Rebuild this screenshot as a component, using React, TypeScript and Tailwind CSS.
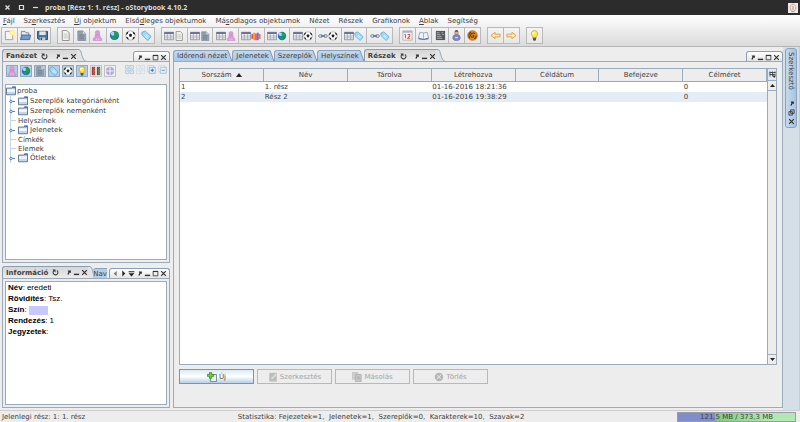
import type { ReactNode } from "react";
import clsx from "clsx";

type IconName =
  | "new" | "open" | "save" | "page" | "note" | "person" | "globe" | "ball" | "tag" | "table" | "people"
  | "link" | "calendar" | "book" | "memo" | "figure" | "spiral" | "left" | "right" | "bulb" | "strands" | "puzzle"
  | "gridA" | "gridB" | "expand" | "collapse" | "folder" | "refresh" | "pin" | "min" | "max" | "close"
  | "prev" | "next" | "list" | "restore" | "add" | "edit" | "copy" | "remove";

const shapes: Record<IconName, ReactNode> = {
  new: (
    <>
      <path d="M1.500 1.500h8v9h-8z" fill="#f4f4f2" stroke="#9a9a98" />
      <circle cx="9" cy="3" r="3" fill="#fff27a" />
      <circle cx="9" cy="3" r="1.500" fill="#fffbd0" />
    </>
  ),
  open: (
    <>
      <path d="M1.500 9.500V1.500h4l1 1.500h3v3" fill="#e8e8e8" stroke="#7d8790" />
      <path d="M.5 10.500l1.500-5h9.500l-1 5z" fill="#6f9bd0" stroke="#3f6ba5" />
    </>
  ),
  save: (
    <>
      <path d="M.5 1.500h11v9H2l-1.500-1.500z" fill="#4b7399" stroke="#2d4a66" />
      <path d="M2.500 1.500h7v4h-7z" fill="#dfe7ee" />
      <path d="M3 8h6v3H3z" fill="#c3ccd4" />
      <path d="M4 8.500h1.500V11H4z" fill="#2d4a66" />
    </>
  ),
  page: (
    <>
      <path d="M2.500.5h5l2.500 2.500v8.500h-7.500z" fill="#f2f2f0" stroke="#8b8b88" />
      <path d="M4 4.500h4M4 6.500h4.500M4 8.500h4.500" stroke="#b4b4b1" strokeWidth=".8" />
    </>
  ),
  note: (
    <>
      <path d="M2 1h5.500L10.500 4v7.500H2z" fill="#93a1ae" stroke="#788796" strokeWidth=".8" />
      <path d="M7.500 1v3h3" fill="#d4dbe1" />
      <path d="M3.500 5.500h5M3.500 7.500h5M3.500 9.500h5" stroke="#687683" strokeWidth=".8" />
    </>
  ),
  person: (
    <>
      <circle cx="6" cy="3" r="2.500" fill="#db9bd9" stroke="#c583c6" strokeWidth=".5" />
      <path d="M3.500 5.200h5v2l2 2v2.300h-9V9.200l2-2z" fill="#db9bd9" stroke="#c583c6" strokeWidth=".7" />
      <path d="M4.800 9v2.300M7.200 9v2.300" stroke="#f2d9f1" strokeWidth=".8" />
    </>
  ),
  globe: (
    <>
      <circle cx="6" cy="6" r="5" fill="#1f6fc4" />
      <circle cx="4.200" cy="4" r="2.200" fill="#a5dcf8" />
      <path d="M6 1.500l3 1 1.700 3.500L8.500 7.500l-2-1-1-2zM3 6.800l3 .5 2 1.500-1.500 1.900-2.700-1z" fill="#1fa348" />
    </>
  ),
  ball: (
    <>
      <circle cx="6" cy="6" r="5" fill="#fafafa" stroke="#8a8a8a" strokeWidth=".6" />
      <path d="M4.200 5.200L6 3.900l1.800 1.300-.7 2.200H4.900zM.8 5.500L3 4 3.800 1.600 1.900 2.500zM8.200 1.600L9 4l2.200 1.500-.6-2.500zM1.200 7.500l2 .5 1 2.700-2-1.200zM8 10.700l.8-2.700 2-.5-.9 2z" fill="#1d1d1d" />
    </>
  ),
  tag: (
    <>
      <path d="M1 2.500L4.500 1l6.500 6-3.500 4.500L1 5.500z" fill="#a6dcf5" stroke="#4ba3cf" strokeWidth=".8" />
      <circle cx="3.200" cy="3.600" r=".9" fill="#fff" stroke="#4ba3cf" strokeWidth=".4" />
      <path d="M5 5l3 3M4 6l3 3" stroke="#e9f8ff" strokeWidth=".8" />
    </>
  ),
  table: (
    <>
      <path d="M.5 1.500h11v9H.5z" fill="#f4f4f6" stroke="#6f7280" strokeWidth=".8" />
      <path d="M.5 1.500h11v2H.5z" fill="#5b6096" />
      <path d="M4 3.500v7M8 3.500v7M.5 6h11M.5 8.300h11" stroke="#8b8f9b" strokeWidth=".7" />
    </>
  ),
  people: (
    <>
      <path d="M.5 3.500h2.200v6H.5z" fill="#e0524d" />
      <path d="M2.700 2h2.200v9H2.700z" fill="#f59a2c" />
      <path d="M4.900 3h2.200v8H4.900z" fill="#e0559f" />
      <path d="M7.100 2h2.200v9H7.100z" fill="#4a7de0" />
      <path d="M9.300 3.500h2.200v6H9.300z" fill="#f0753d" />
    </>
  ),
  link: (
    <g fill="none" strokeWidth="1.200">
      <rect x=".8" y="4.500" width="4.500" height="3" rx="1.500" stroke="#7889a3" />
      <rect x="6.700" y="4.500" width="4.500" height="3" rx="1.500" stroke="#7889a3" />
      <path d="M3.500 6h5" stroke="#405577" />
    </g>
  ),
  calendar: (
    <>
      <path d="M1 1h10v10H1z" fill="#f7f7fa" stroke="#9b9fb5" strokeWidth=".8" />
      <path d="M1 1h10v2H1z" fill="#a8b0d4" />
      <path d="M3.800 4.500v4.500M2.800 5.300l1-.8M6 5h2.500v1.500L6.200 9H9" fill="none" stroke="#e0532c" strokeWidth="1.100" />
    </>
  ),
  book: (
    <>
      <path d="M.5 8.500L2 2.500l4 .8 4-.8 1.500 6-5.500 1.800z" fill="#eef3fa" stroke="#8393aa" strokeWidth=".8" />
      <path d="M.5 8.500v1.500l5.500 1 5.500-1V8.500L6 10z" fill="#53709c" />
      <path d="M6 3.500V10" stroke="#8393aa" strokeWidth=".7" />
    </>
  ),
  memo: (
    <>
      <path d="M1 1h10v10H1z" fill="#55585c" />
      <path d="M2 3h3M2 5h4M2 7h5M2 9h6M7 3h2M8 5h2" stroke="#b8bcc0" strokeWidth=".9" />
    </>
  ),
  figure: (
    <>
      <circle cx="6" cy="3" r="2" fill="#e2b38b" stroke="#8d6746" strokeWidth=".6" />
      <path d="M4 2a2 2 0 0 1 4 0z" fill="#6b4a32" />
      <path d="M2 8.500C2 5.500 4 5 6 5s4 .5 4 3.500C10 11 8 11.500 6 11.500S2 11 2 8.500z" fill="#7f87c4" stroke="#5a62a4" strokeWidth=".6" />
      <path d="M4.500 7.500h3V9h-3z" fill="#d3d6f3" />
    </>
  ),
  spiral: (
    <>
      <circle cx="6" cy="6" r="5.300" fill="#e58a1f" stroke="#93520e" strokeWidth=".6" />
      <path d="M6 6c1-1 2 .2 1.300 1.200C6.400 8.500 4 8 4 6c0-2.500 3-3.500 4.800-1.800M3 9C1.500 7 2 3.500 4.500 2.200M8 9.500c1.500-.7 2.200-2 2-3.500" fill="none" stroke="#6a3606" strokeWidth="1.100" />
    </>
  ),
  left: <path d="M1 6l4.500-3.500v2H11v3H5.500v2z" fill="#ffe9a8" stroke="#cf9a45" strokeWidth=".9" />,
  right: <path d="M11 6L6.500 2.500v2H1v3h5.500v2z" fill="#ffe9a8" stroke="#cf9a45" strokeWidth=".9" />,
  bulb: (
    <>
      <path d="M6 .5a3.600 3.600 0 0 1 2 6.500V8.500H4V7A3.600 3.600 0 0 1 6 .5z" fill="#ffe84a" stroke="#a48a20" strokeWidth=".6" />
      <circle cx="5" cy="3.500" r="1.300" fill="#fffbd0" />
      <path d="M4.300 8.500h3.400v2.300l-1 .8H5.300l-1-.8z" fill="#55595f" />
    </>
  ),
  strands: (
    <>
      <path d="M1 1h4v10H1z" fill="#a33a3a" />
      <path d="M7 1h4v10H7z" fill="#3d6b40" />
      <path d="M3 1.500l1 1.500-1 1.500L4 6 3 7.500 4 9l-1 1.500" fill="none" stroke="#d99a9a" strokeWidth=".8" />
      <path d="M9 1.500l1 1.500-1 1.500L10 6 9 7.500l1 1.500-1 1.500" fill="none" stroke="#b5a0a0" strokeWidth=".8" />
    </>
  ),
  puzzle: (
    <>
      <circle cx="6" cy="6" r="5" fill="#aba7d8" />
      <path d="M6 1v10M1 6h10" stroke="#f1f0fb" strokeWidth="1.300" />
    </>
  ),
  gridA: (
    <g fill="#f5f9fc" stroke="#8fb0cd" strokeWidth=".8">
      <path d="M.8.8h4.400v4.400H.8zM6.800.8h4.400v4.400H6.800zM.8 6.800h4.400v4.400H.8zM6.800 6.800h4.400v4.400H6.800z" />
      <path d="M2 3h2M8 3h2M2 9h2M8 9h2" />
    </g>
  ),
  gridB: (
    <g fill="#f5f9fc" stroke="#bccfe0" strokeWidth=".8">
      <path d="M.8.8h4.400v4.400H.8zM6.800.8h4.400v4.400H6.800zM.8 6.800h4.400v4.400H.8zM6.800 6.800h4.400v4.400H6.800z" />
      <path d="M2 3h2M8 3h2M2 9h2M8 9h2" />
    </g>
  ),
  expand: (
    <>
      <path d="M1 1h8v8H1z" fill="#fff" stroke="#a9c4dc" />
      <path d="M3 3h8v8H3z" fill="#e9f3fb" stroke="#7ba7cd" />
      <path d="M7 4.800v4.400M4.800 7h4.400" stroke="#1f6fb5" strokeWidth="1.300" />
    </>
  ),
  collapse: (
    <>
      <path d="M1 1h8v8H1z" fill="#fff" stroke="#b5cbe0" />
      <path d="M3 3h8v8H3z" fill="#e9f3fb" stroke="#8fb3d2" />
      <path d="M4.800 7h4.400" stroke="#5c94c4" strokeWidth="1.300" />
    </>
  ),
  folder: (
    <>
      <path d="M.6 10.500v-8h6l1.400-1.300h3.400v9.300z" fill="#c3d7ec" stroke="#5e7286" strokeWidth="1.100" />
      <path d="M1.200 4h9.600v3H1.200z" fill="#f3f8fc" />
      <path d="M7.800.7h4v2H6.800z" fill="#5272c4" />
    </>
  ),
  refresh: (
    <>
      <path d="M4 2.200A4.200 4.200 0 1 0 8.500 2.500" fill="none" stroke="#3c3c3c" strokeWidth="1.800" />
      <path d="M.5.8h5.500v5z" fill="#3c3c3c" />
    </>
  ),
  pin: <path d="M4.500 2.500h5.500v4.500L8 6 6 10 4 9l2-4z" fill="#2b2b2b" />,
  min: <path d="M1.500 8h9v2.500h-9z" fill="#333" />,
  max: (
    <>
      <path d="M2 2.500h8v7.500H2z" fill="none" stroke="#333" strokeWidth="1.400" />
      <path d="M1.500 1.500h9v2h-9z" fill="#333" />
    </>
  ),
  close: <path d="M2 2l8 8M10 2l-8 8" stroke="#333" strokeWidth="2" />,
  prev: <path d="M8 1.500v9L3 6z" fill="#777" />,
  next: <path d="M4 1v10l5-5z" fill="#222" />,
  list: <path d="M1 2h10v1.800H1zM1 5.500h10L6 11z" fill="#222" />,
  restore: (
    <g fill="none" stroke="#333" strokeWidth="1.400">
      <path d="M4.500 1.500h6v6h-6z" />
      <path d="M1.500 4.500h6v6h-6z" />
    </g>
  ),
  add: (
    <>
      <path d="M4 3h7.500v8.500H4z" fill="#eef1f4" stroke="#5d7389" />
      <path d="M3 .5h2.500v2.300H8v2.500H5.500v2.300H3V5.300H.5V2.800H3z" fill="#6fd03c" stroke="#2c7d1d" strokeWidth=".8" />
    </>
  ),
  edit: (
    <>
      <path d="M1.500 1h9v10.500h-9z" fill="#bdbdbd" />
      <path d="M3.500 9l1-2.500L9 2l1.500 1.500L6 8z" fill="#dcdcdc" />
    </>
  ),
  copy: (
    <>
      <path d="M.5.5H7v8H.5z" fill="#d0d0d0" stroke="#c0c0c0" />
      <path d="M4 3h7v8.500H4z" fill="#c8c8c8" stroke="#adadad" />
      <path d="M5.500 6h4M5.500 8h4" stroke="#aaa" />
    </>
  ),
  remove: (
    <>
      <circle cx="6" cy="6" r="5" fill="#b5b5b5" />
      <path d="M3.500 8.500l5-5M4 4l4 4" stroke="#dedede" strokeWidth="1.400" />
    </>
  ),
};

function Icon({ name, className = "size-[11px]" }: { name: IconName; className?: string }) {
  return (
    <svg viewBox="0 0 12 12" className={clsx("shrink-0", className)} aria-hidden="true">
      {shapes[name]}
    </svg>
  );
}

const menus: [string, string, string][] = [
  ["", "F", "ájl"],
  ["Sz", "e", "rkesztés"],
  ["", "Ú", "j objektum"],
  ["Első", "d", "leges objektumok"],
  ["Má", "s", "odlagos objektumok"],
  ["Nézet", "", ""],
  ["Részek", "", ""],
  ["Grafikonok", "", ""],
  ["", "A", "blak"],
  ["Segítség", "", ""],
];

const toolbar: { width: string; items: IconName[][] }[] = [
  { width: "w-[50px]", items: [["new"], ["open"], ["save"]] },
  { width: "w-[98px]", items: [["page"], ["note"], ["person"], ["globe"], ["ball"], ["tag"]] },
  {
    width: "w-[232px]",
    items: [
      ["table", "page"],
      ["table", "note"],
      ["table", "person"],
      ["table", "people"],
      ["table", "globe"],
      ["table", "ball"],
      ["link", "ball"],
      ["table", "tag"],
      ["link", "tag"],
    ],
  },
  { width: "w-[82px]", items: [["calendar"], ["book"], ["memo"], ["figure"], ["spiral"]] },
  { width: "w-[33px]", items: [["left"], ["right"]] },
  { width: "w-[17px]", items: [["bulb"]] },
];

const filters: { icon: IconName; on: boolean }[] = [
  { icon: "person", on: true },
  { icon: "globe", on: true },
  { icon: "note", on: true },
  { icon: "tag", on: true },
  { icon: "ball", on: true },
  { icon: "bulb", on: true },
  { icon: "strands", on: false },
  { icon: "puzzle", on: false },
];

const tree = [
  { label: "Szereplők kategóriánként", folder: true },
  { label: "Szereplők nemenként", folder: true },
  { label: "Helyszínek", folder: false },
  { label: "Jelenetek", folder: true },
  { label: "Címkék", folder: false },
  { label: "Elemek", folder: false },
  { label: "Ötletek", folder: true },
];

const columns = ["Sorszám", "Név", "Tárolva", "Létrehozva", "Céldátum", "Befejezve", "Célméret"];
const rows = [
  ["1", "1. rész", "", "01-16-2016 18:21:36", "", "", "0"],
  ["2", "Rész 2", "", "01-16-2016 19:38:29", "", "", "0"],
];

function IconButton({ name, label }: { name: IconName; label: string }) {
  return (
    <button type="button" aria-label={label} className="flex shrink-0">
      <Icon name={name} className="size-[7px]" />
    </button>
  );
}

function ActiveTab({ title }: { title: string }) {
  return (
    <div className="flex h-[13px] shrink-0">
      <div className="flex items-center rounded-tl-[3px] border-t border-l border-[#8d9eae] bg-linear-to-b from-[#d6d6d6] to-[#eeeeee] pl-[3px] font-bold">
        <span>{title}</span>
        <span className="ml-1 flex">
          <IconButton name="refresh" label="Frissítés" />
        </span>
        <span className="ml-[6px] flex items-center gap-px">
          <IconButton name="pin" label="Rögzítés" />
          <IconButton name="min" label="Kis méret" />
          <IconButton name="close" label="Bezárás" />
        </span>
      </div>
      <svg viewBox="0 0 10 13" className="h-[13px] w-[10px]" aria-hidden="true">
        <path d="M0 0h1c3 0 3 3 4 6s2 6.500 5 6.500V13H0z" fill="#e4e4e4" />
        <path d="M0 .5h1c3 0 3 3 4 6s2 6 5 6" fill="none" stroke="#8d9eae" />
      </svg>
    </div>
  );
}

function BlueTab({ title }: { title: string }) {
  return (
    <button type="button" className="flex h-[12px] shrink-0 leading-[10px]">
      <span className="h-full rounded-tl-[3px] border-t border-l border-[#8aa3bb] bg-linear-to-b from-[#c4d9ee] to-[#a9c4e0] pl-[3px]">
        {title}
      </span>
      <svg viewBox="0 0 5 12" className="h-full w-[5px]" aria-hidden="true">
        <path d="M0 0h1l4 11v1H0z" fill="#b6cee6" />
        <path d="M0 .5h1l3.500 9.500v2" fill="none" stroke="#7f98b0" />
      </svg>
    </button>
  );
}

function WindowButtons({ extra }: { extra?: ReactNode }) {
  return (
    <div className="ml-auto flex h-[11px] shrink-0 items-center gap-px rounded-t-[3px] border border-b-0 border-[#8d9eae] bg-linear-to-b from-white to-[#e2e2e2] px-[2px]">
      {extra}
      <IconButton name="pin" label="Rögzítés" />
      <IconButton name="min" label="Kis méret" />
      <IconButton name="max" label="Teljes méret" />
      <IconButton name="close" label="Bezárás" />
    </div>
  );
}

function ActionButton({ icon, label, disabled }: { icon: IconName; label: string; disabled?: boolean }) {
  return (
    <button
      type="button"
      disabled={disabled}
      className={clsx(
        "flex h-[15px] w-[75px] items-center justify-center gap-[2px] border",
        disabled
          ? "border-[#b8b8b8] text-[#a3a3a3]"
          : "border-[#7d94ab] bg-linear-to-b from-[#dce9f5] via-white to-[#b7cfe5]",
      )}
    >
      <Icon name={icon} className="size-[10px]" />
      {label}
    </button>
  );
}

function TitleBar() {
  return (
    <header className="flex h-[15px] shrink-0 items-center bg-[#2c2c2c] pr-[2px] pl-1 text-[#dcdcd8]">
      <button type="button" aria-label="Bezárás" className="mr-[7px]">
        <svg viewBox="0 0 7 7" className="size-[7px]" aria-hidden="true">
          <path d="M1.500 1.500l4 4M5.500 1.500l-4 4" stroke="#dcdcd8" strokeWidth="1.400" />
        </svg>
      </button>
      <button type="button" aria-label="Teljes méret" className="mr-[7px]">
        <svg viewBox="0 0 7 7" className="size-[7px]" aria-hidden="true">
          <path d="M1.500 1.500h4v4h-4z" fill="none" stroke="#dcdcd8" strokeWidth="1.200" />
        </svg>
      </button>
      <button type="button" aria-label="Kis méret" className="mr-[6px]">
        <svg viewBox="0 0 7 7" className="size-[7px]" aria-hidden="true">
          <path d="M1 3.500h5" stroke="#dcdcd8" strokeWidth="1.200" />
        </svg>
      </button>
      <h1 className="font-['Open_Sans',sans-serif] text-[7px] font-bold">
        proba [Rész 1: 1. rész] - oStorybook 4.10.2
      </h1>
      <svg viewBox="0 0 10 10" className="ml-auto size-[10px]" aria-hidden="true">
        <path d="M0 0h10v10H0z" fill="#eeeae8" />
        <path d="M5 1c3 1 3 3 2.500 5S6 8.500 5 8.500 3 8 2.500 6 2 2 5 1z" fill="none" stroke="#e39a8c" />
        <path d="M5 3v4M3.500 8.500h3" stroke="#999" />
      </svg>
    </header>
  );
}

function TreePanel() {
  return (
    <section className="flex min-h-0 flex-[3] flex-col">
      <div className="flex items-end">
        <ActiveTab title="Fanézet" />
        <WindowButtons />
      </div>
      <div className="-mt-px flex min-h-0 flex-1 flex-col border border-[#9aacbc] bg-[#ededed] p-[2px]">
        <div className="flex h-5 shrink-0 items-start pt-px pl-px">
          <div className="flex gap-[2px]">
            {filters.map(({ icon, on }) => (
              <button
                key={icon}
                type="button"
                aria-label={icon}
                aria-pressed={on}
                className={clsx(
                  "flex size-3 items-center justify-center border",
                  on ? "border-[#8fa8c0] bg-[#b4cde5]" : "border-[#c2c2c2] bg-[#eeeeee]",
                )}
              >
                <Icon name={icon} className="size-[10px]" />
              </button>
            ))}
          </div>
          <div className="ml-auto flex gap-[2px]">
            {(["gridA", "gridB", "expand", "collapse"] as IconName[]).map((name) => (
              <button key={name} type="button" aria-label={name}>
                <Icon name={name} className="size-[9px]" />
              </button>
            ))}
          </div>
        </div>
        <div className="min-h-0 flex-1 border border-[#9aacbc] bg-white">
          <div className="flex h-[11px] items-center gap-px">
            <Icon name="folder" className="size-[10px]" />
            proba
          </div>
          <ul className="ml-1">
            {tree.map(({ label, folder }) => (
              <li
                key={label}
                className={clsx("flex items-center border-l border-[#c3d5e8]", folder ? "h-[10px]" : "h-[9px]")}
              >
                {folder ? (
                  <button type="button" className="-ml-[2px] flex items-center">
                    <svg viewBox="0 0 7 5" className="h-[5px] w-[7px]" aria-hidden="true">
                      <circle cx="2" cy="2.500" r="1.300" fill="#d9e6f5" stroke="#5b80b8" strokeWidth="1" />
                      <path d="M3.500 2.500H6" stroke="#5b80b8" />
                    </svg>
                    <Icon name="folder" className="mx-[2px] size-[10px]" />
                    {label}
                  </button>
                ) : (
                  <>
                    <span className="mr-[2px] h-px w-[5px] bg-[#c3d5e8]" />
                    {label}
                  </>
                )}
              </li>
            ))}
          </ul>
        </div>
      </div>
    </section>
  );
}

function InfoPanel() {
  const info = [
    ["Név", "eredeti"],
    ["Rövidítés", "Tsz."],
    ["Szín", ""],
    ["Rendezés", "1"],
    ["Jegyzetek", ""],
  ];
  return (
    <section className="flex min-h-0 flex-[2] flex-col">
      <div className="flex items-end">
        <ActiveTab title="Információ" />
        <button
          type="button"
          className="-ml-[5px] h-[11px] shrink-0 rounded-tl-[3px] border-t border-[#8aa3bb] bg-[#b4cde5] leading-[10px]"
        >
          Nav
        </button>
        <WindowButtons
          extra={
            <>
              <IconButton name="prev" label="Előző" />
              <IconButton name="next" label="Következő" />
              <IconButton name="list" label="Lista" />
            </>
          }
        />
      </div>
      <div className="-mt-px flex min-h-0 flex-1 flex-col border border-[#9aacbc] bg-[#ededed] p-[2px]">
        <dl className="min-h-0 flex-1 border border-[#9aacbc] bg-white px-[2px] py-px font-['Liberation_Sans',sans-serif] text-[8px] text-black">
          {info.map(([term, value]) => (
            <div key={term} className="flex h-[11px] items-center">
              <dt>
                <b>{term}</b>:
              </dt>
              <dd className="ml-[2px]">
                {term === "Szín" ? <span className="block h-[9px] w-[19px] bg-[#c8c8ff]" /> : value}
              </dd>
            </div>
          ))}
        </dl>
      </div>
    </section>
  );
}

function PartsPanel() {
  return (
    <main className="flex min-w-0 flex-1 flex-col">
      <div className="flex items-end">
        {["Időrendi nézet", "Jelenetek", "Szereplők", "Helyszínek"].map((title) => (
          <BlueTab key={title} title={title} />
        ))}
        <ActiveTab title="Részek" />
        <WindowButtons />
      </div>
      <div className="-mt-px flex min-h-0 flex-1 flex-col border border-[#9aacbc] bg-[#ededed] px-[5px] pt-[6px]">
        <div className="flex min-h-0 flex-1 border border-[#9aacbc] bg-white">
          <div className="min-w-0 flex-1">
            <table className="w-full table-fixed border-collapse">
              <thead>
                <tr className="h-3 bg-[#ededed]">
                  {columns.map((name, i) => (
                    <th key={name} className="border-r border-b border-[#9aacbc] p-0 font-normal">
                      {name}
                      {i === 0 && (
                        <svg viewBox="0 0 6 4" className="ml-1 inline h-1 w-[6px]" aria-hidden="true">
                          <path d="M0 4l3-4 3 4z" fill="#222" />
                        </svg>
                      )}
                    </th>
                  ))}
                </tr>
              </thead>
              <tbody>
                {rows.map((row) => (
                  <tr key={row[0]} className="h-[10px] even:bg-[#e4edf5]">
                    {row.map((cell, i) => (
                      <td key={i} className="p-0 pl-px">
                        {cell}
                      </td>
                    ))}
                  </tr>
                ))}
              </tbody>
            </table>
          </div>
          <div className="flex w-[9px] shrink-0 flex-col border-l border-[#9aacbc] bg-[#ededed]">
            <button
              type="button"
              aria-label="Oszlopok"
              className="flex h-3 items-center justify-center border-b border-[#9aacbc] bg-[#dde8f2]"
            >
              <svg viewBox="0 0 7 7" className="size-[7px]" aria-hidden="true">
                <path d="M.5 1.500h6M.5 3.500h6M1 .5v5M3.500 .5v5M6 .5v2" fill="none" stroke="#333" strokeWidth=".8" />
                <path d="M3.500 4.500h3.500L5.250 7z" fill="#222" />
              </svg>
            </button>
            <button
              type="button"
              aria-label="Fel"
              className="flex h-[10px] items-center justify-center border-b border-[#9aacbc]"
            >
              <svg viewBox="0 0 5 3" className="h-[3px] w-[5px]" aria-hidden="true">
                <path d="M0 3l2.500-3L5 3z" fill="#222" />
              </svg>
            </button>
            <button
              type="button"
              aria-label="Le"
              className="mt-auto flex h-[10px] items-center justify-center border-t border-[#9aacbc]"
            >
              <svg viewBox="0 0 5 3" className="h-[3px] w-[5px]" aria-hidden="true">
                <path d="M0 0l2.500 3L5 0z" fill="#222" />
              </svg>
            </button>
          </div>
        </div>
        <div className="flex gap-[3px] pt-1 pb-[23px]">
          <ActionButton icon="add" label="Új" />
          <ActionButton icon="edit" label="Szerkesztés" disabled />
          <ActionButton icon="copy" label="Másolás" disabled />
          <ActionButton icon="remove" label="Törlés" disabled />
        </div>
      </div>
    </main>
  );
}

export default function App() {
  return (
    <div className="flex h-screen flex-col bg-[#ededed] font-['DejaVu_Sans',sans-serif] text-[7px] leading-[10px] text-[#404040]">
      <TitleBar />
      <div className="flex h-8 shrink-0 flex-col border-b border-[#b5b5b5] bg-linear-to-b from-white to-[#dadada]">
        <nav className="flex h-3 shrink-0 items-center gap-[9px] pl-[3px]">
          {menus.map(([before, key, after]) => (
            <button key={before + key + after} type="button" className="whitespace-nowrap">
              {before}
              <u>{key}</u>
              {after}
            </button>
          ))}
        </nav>
        <div className="flex gap-[6px] pl-px" role="toolbar">
          {toolbar.map(({ width, items }) => (
            <div key={width} className={clsx("flex h-[17px] border-l border-[#b9b9b9]", width)}>
              {items.map((icons) => (
                <button
                  key={icons.join("-")}
                  type="button"
                  aria-label={icons.join(" ")}
                  className="flex flex-1 items-center justify-center border-y border-r border-[#b9b9b9] bg-white/30"
                >
                  {icons.map((name) => (
                    <Icon key={name} name={name} className={icons.length > 1 ? "size-[10px]" : "size-[11px]"} />
                  ))}
                </button>
              ))}
            </div>
          ))}
        </div>
      </div>

      <div className="flex min-h-0 flex-1">
        <div className="flex min-w-0 flex-1 gap-[3px] pt-[2px] pb-[2px] pl-[2px]">
          <div className="flex w-[168px] shrink-0 flex-col gap-[3px]">
            <TreePanel />
            <InfoPanel />
          </div>
          <PartsPanel />
        </div>
        <aside className="w-[17px] shrink-0 border-r border-[#c5ccd3] bg-[#d5dfe8] pt-px pl-[2px]">
          <div className="flex h-20 w-3 flex-col items-center rounded-[3px] border border-[#8aa3bb] bg-linear-to-r from-[#c4d9ee] to-[#a9c4e0] pt-[3px] pb-[2px]">
            <button type="button" className="leading-[10px] [writing-mode:vertical-rl]">
              Szerkesztő
            </button>
            <div className="mt-auto flex flex-col gap-[2px]">
              <IconButton name="pin" label="Rögzítés" />
              <IconButton name="restore" label="Visszaállítás" />
              <IconButton name="close" label="Bezárás" />
            </div>
          </div>
        </aside>
      </div>

      <footer className="flex h-3 shrink-0 items-center justify-between border-t border-[#cfcfcf] pr-1 pl-[2px]">
        <span>Jelenlegi rész: 1: 1. rész</span>
        <span className="whitespace-pre">
          Statisztika: Fejezetek=1,  Jelenetek=1,  Szereplők=0,  Karakterek=10,  Szavak=2
        </span>
        <div className="h-[10px] w-[119px] border border-[#9a9aa8] bg-linear-to-r from-[#7f8ecb] from-32% via-[#7dcb7d] via-32% to-[#b2e8b2] to-78% text-center leading-[8px]">
          121,5 MB / 373,3 MB
        </div>
      </footer>
    </div>
  );
}
